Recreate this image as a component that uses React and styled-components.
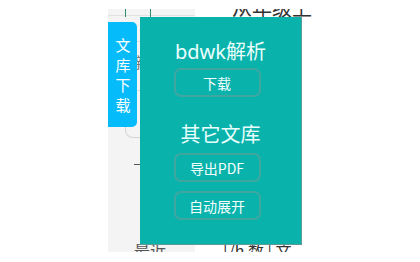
import React from "react";
import styled, { createGlobalStyle } from "styled-components";

const Global = createGlobalStyle`
  html, body { margin: 0; padding: 0; background: #ffffff; }
  body { font-family: "Noto Sans", "Noto Sans CJK SC", sans-serif; }
  #root { width: 420px; height: 262px; position: relative; overflow: hidden; }
`;

const Page = styled.div`
  margin: 9px 0 0 108px;
  width: 204px;
  height: 243px;
  display: flex;
  overflow: hidden;
`;

const Sidebar = styled.div`
  width: 87px;
  background: #f4f4f4;
  display: flex;
  flex-direction: column;
  overflow: hidden;
`;

const TopBar = styled.div`
  height: 6px;
  border-bottom: 1px solid #e2e2e2;
  display: flex;
  flex-shrink: 0;
`;

const Stub = styled.div`
  margin-left: 17px;
  width: 24px;
  height: 8px;
  flex-shrink: 0;
  border-left: 1px solid #2e8f6f;
  border-right: 1px solid #2e8f6f;
`;

const NavItem = styled.div`
  margin: 25px 0 0 26px;
  height: 50px;
  flex-shrink: 0;
  border-top: 1px solid #dcdcdc;
  border-bottom: 1px solid #dcdcdc;
  font-family: "Noto Sans CJK SC", sans-serif;
  font-size: 16px;
  line-height: 1;
  color: #777;
  padding-top: 12px;
  box-sizing: border-box;
`;

const RoundBox = styled.div`
  margin-left: 17px;
  width: 60px;
  height: 47px;
  flex-shrink: 0;
  box-sizing: border-box;
  border: 1px solid #d4d4d4;
  border-top: none;
  border-radius: 0 0 8px 8px;
`;

const Dash = styled.div`
  margin: 26px 0 0 26px;
  width: 8px;
  height: 1px;
  flex-shrink: 0;
  background: #555;
`;

const Recent = styled.div`
  margin: auto 0 -6px 26px;
  font-family: "Noto Sans CJK SC", sans-serif;
  font-size: 16px;
  line-height: 16px;
  color: #555;
  white-space: nowrap;
`;

const Main = styled.div`
  flex: 1;
  background: #ffffff;
  display: flex;
  flex-direction: column;
  overflow: hidden;
`;

const Header = styled.div`
  display: flex;
  align-items: flex-start;
  height: 23px;
  flex-shrink: 0;
`;

const Title = styled.div`
  margin: -11px 0 0 37px;
  font-family: "Noto Sans CJK SC", sans-serif;
  font-size: 20px;
  line-height: 20px;
  color: #333;
  white-space: nowrap;
`;

const Corner = styled.div`
  margin-left: auto;
  width: 10px;
  height: 22px;
  border-bottom: 1px solid #e6e6e6;
  display: flex;
`;

const CornerTick = styled.div`
  margin-left: 4px;
  width: 1px;
  height: 11px;
  background: #cfcfcf;
`;

const Footer = styled.div`
  margin: auto 0 -6px 28px;
  font-family: "Noto Sans CJK SC", sans-serif;
  font-size: 16px;
  line-height: 16px;
  color: #333;
  white-space: nowrap;
`;

const Widget = styled.div`
  position: absolute;
  left: 108px;
  top: 17px;
  display: flex;
  align-items: flex-start;
  gap: 3px;
`;

const Tab = styled.div`
  margin-top: 5px;
  width: 29px;
  height: 105px;
  background: #05bbfa;
  border-radius: 0 5px 5px 0;
  color: #ffffff;
  font-family: "Noto Sans CJK SC", sans-serif;
  font-size: 15px;
  line-height: 20px;
  display: flex;
  flex-direction: column;
  align-items: center;
  justify-content: center;
  padding-left: 1px;
  box-sizing: border-box;
`;

const Panel = styled.div`
  width: 162px;
  height: 228px;
  box-sizing: border-box;
  background: #09b3ac;
  border-right: 1px solid #5f9995;
  border-bottom: 1px solid #5f9995;
  display: flex;
  flex-direction: column;
  align-items: center;
  padding-top: 22px;
`;

const Heading = styled.div`
  font-family: "Noto Sans", "Noto Sans CJK SC", sans-serif;
  font-size: 20px;
  line-height: 26px;
  color: #eafffd;
  margin-top: ${(p) => p.$mt || 0}px;
  margin-bottom: 3px;
`;

const Btn = styled.div`
  width: 87px;
  height: 29px;
  box-sizing: border-box;
  border: 2px solid #3fa7a0;
  border-radius: 7px;
  display: flex;
  align-items: center;
  justify-content: center;
  color: #f4fffe;
  font-family: "Noto Sans CJK SC", sans-serif;
  font-size: 14px;
  margin-right: 7px;
  margin-top: ${(p) => p.$mt || 0}px;
  margin-bottom: ${(p) => p.$mb || 0}px;
`;

export default function App() {
  return (
    <>
      <Global />
      <Page>
        <Sidebar>
          <TopBar>
            <Stub />
          </TopBar>
          <NavItem>新</NavItem>
          <RoundBox />
          <Dash />
          <Recent>最近</Recent>
        </Sidebar>
        <Main>
          <Header>
            <Title>从年级上</Title>
            <Corner>
              <CornerTick />
            </Corner>
          </Header>
          <Footer>[/h 数 | 文</Footer>
        </Main>
      </Page>
      <Widget>
        <Tab>
          <span>文</span>
          <span>库</span>
          <span>下</span>
          <span>载</span>
        </Tab>
        <Panel>
          <Heading>bdwk解析</Heading>
          <Btn>下载</Btn>
          <Heading $mt={25}>其它文库</Heading>
          <Btn $mt={2} $mb={9}>导出PDF</Btn>
          <Btn>自动展开</Btn>
        </Panel>
      </Widget>
    </>
  );
}
